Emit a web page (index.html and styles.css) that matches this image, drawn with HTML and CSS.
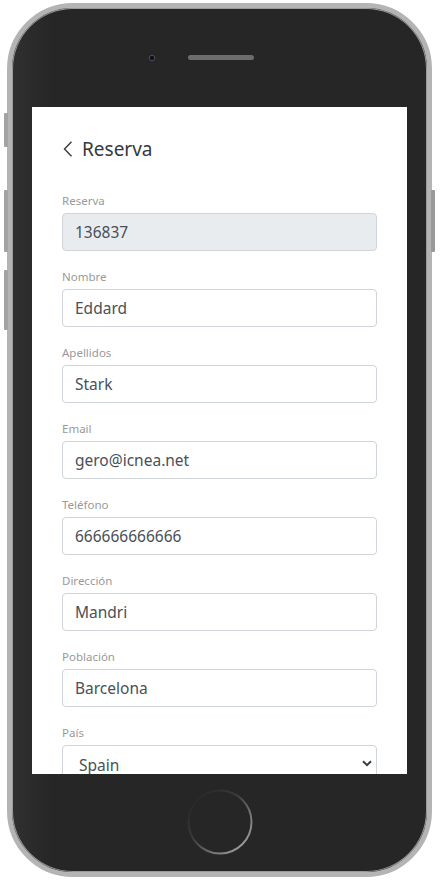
FILE: index.html
```html
<!DOCTYPE html>
<html lang="es">
<head>
<meta charset="utf-8">
<title>Reserva</title>
<link rel="stylesheet" href="styles.css">
</head>
<body>
<div class="device">
  <span class="side-btn side-btn--mute"></span>
  <span class="side-btn side-btn--vol-up"></span>
  <span class="side-btn side-btn--vol-down"></span>
  <span class="side-btn side-btn--power"></span>
  <div class="phone">
    <div class="bezel-top">
      <span class="camera"></span>
      <span class="speaker"></span>
    </div>
    <div class="screen">
      <div class="content">
        <header class="page-header">
          <svg class="back-icon" width="10" height="16" viewBox="0 0 10 16" aria-hidden="true">
            <polyline points="8.5,0.8 1.5,8 8.5,15.2" fill="none" stroke="#343a40" stroke-width="1.4"/>
          </svg>
          <h1 class="page-title">Reserva</h1>
        </header>
        <form class="form">
          <div class="field">
            <label class="field-label">Reserva</label>
            <input class="field-input field-input--disabled" type="text" value="136837" disabled>
          </div>
          <div class="field">
            <label class="field-label">Nombre</label>
            <input class="field-input" type="text" value="Eddard">
          </div>
          <div class="field">
            <label class="field-label">Apellidos</label>
            <input class="field-input" type="text" value="Stark">
          </div>
          <div class="field">
            <label class="field-label">Email</label>
            <input class="field-input" type="text" value="gero@icnea.net">
          </div>
          <div class="field">
            <label class="field-label">Teléfono</label>
            <input class="field-input" type="text" value="666666666666">
          </div>
          <div class="field">
            <label class="field-label">Dirección</label>
            <input class="field-input" type="text" value="Mandri">
          </div>
          <div class="field">
            <label class="field-label">Población</label>
            <input class="field-input" type="text" value="Barcelona">
          </div>
          <div class="field">
            <label class="field-label">País</label>
            <div class="select-wrap">
              <select class="field-input field-select">
                <option>Spain</option>
              </select>
              <svg class="select-caret" width="10" height="7" viewBox="0 0 10 7" aria-hidden="true">
                <polyline points="1,1.2 5,5.2 9,1.2" fill="none" stroke="#343a40" stroke-width="2"/>
              </svg>
            </div>
          </div>
        </form>
      </div>
    </div>
    <div class="bezel-bottom">
      <svg class="home-btn" width="68" height="68" viewBox="0 0 68 68" aria-hidden="true">
        <defs>
          <linearGradient id="ring" x1="0.1" y1="0.1" x2="0.9" y2="0.9">
            <stop offset="0" stop-color="#262626"/>
            <stop offset="0.4" stop-color="#3c3c3c"/>
            <stop offset="1" stop-color="#a0a0a0"/>
          </linearGradient>
        </defs>
        <circle cx="34" cy="34" r="31.5" fill="none" stroke="url(#ring)" stroke-width="2"/>
      </svg>
    </div>
  </div>
</div>
</body>
</html>
```

FILE: styles.css
```css
* { box-sizing: border-box; }

html, body {
  margin: 0;
  padding: 0;
  background: #ffffff;
}

body {
  font-family: "Noto Sans", "Open Sans", sans-serif;
  width: 448px;
  height: 886px;
  overflow: hidden;
}

.device {
  position: relative;
  width: 425px;
  height: 874px;
  margin: 3px 0 0 7px;
}

.phone {
  width: 425px;
  height: 874px;
  border: 5px solid #b4b4b4;
  border-radius: 66px;
  background: linear-gradient(90deg, #303030 0px, #262626 40px, #262626 100%);
  display: flex;
  flex-direction: column;
  align-items: center;
  overflow: hidden;
  box-shadow: inset 0 0 0 1px #9a9a9a;
}

.side-btn {
  position: absolute;
  width: 4px;
  background: #a3a3a3;
  border-radius: 1px;
}
.side-btn--mute { left: -3px; top: 110px; height: 34px; }
.side-btn--vol-up { left: -3px; top: 187px; height: 62px; }
.side-btn--vol-down { left: -3px; top: 267px; height: 60px; }
.side-btn--power { right: -3px; top: 187px; height: 62px; background: #999; }

.bezel-top {
  height: 99px;
  width: 100%;
  flex: none;
  display: flex;
  align-items: center;
  justify-content: center;
  gap: 32px;
  padding: 0 37px 0 0;
}

.camera {
  width: 8px;
  height: 8px;
  border-radius: 50%;
  background: radial-gradient(circle at 50% 50%, #101014 0, #101014 1.6px, #4a4a5c 2.6px, #1c1c22 4px);
}

.speaker {
  width: 66px;
  height: 5px;
  border-radius: 3px;
  background-color: #555;
  background-image: radial-gradient(circle, #7a7a7a 0.6px, transparent 0.9px);
  background-size: 2px 2px;
}

.screen {
  width: 375px;
  height: 667px;
  flex: none;
  background: #ffffff;
  overflow: hidden;
}

.content {
  padding: 30px 30px 0 30px;
}

.page-header {
  display: flex;
  align-items: center;
  gap: 9px;
  height: 24px;
  padding-left: 1px;
}

.back-icon { flex: none; }

.page-title {
  margin: 0;
  font-size: 19px;
  font-weight: 400;
  line-height: 24px;
  color: #343a40;
}

.form {
  margin-top: 31px;
  display: flex;
  flex-direction: column;
  gap: 17px;
}

.field {
  display: flex;
  flex-direction: column;
  gap: 3px;
}

.field-label {
  font-size: 11.5px;
  line-height: 18px;
  color: #999;
}

.field-input {
  width: 315px;
  height: 38px;
  margin: 0;
  padding: 0 12px;
  border: 1px solid #ced4da;
  border-radius: 4px;
  background: #fff;
  font-family: inherit;
  font-size: 15.5px;
  color: #495057;
  outline: none;
}

.field-input--disabled {
  background: #e9ecef;
  color: #495057;
  -webkit-text-fill-color: #495057;
  opacity: 1;
}

.select-wrap {
  position: relative;
  width: 315px;
}

.field-select {
  appearance: none;
  -webkit-appearance: none;
  padding-left: 16px;
  height: 40px;
}

.select-caret {
  position: absolute;
  right: 5px;
  top: 15px;
}

.bezel-bottom {
  flex: 1;
  width: 100%;
  display: flex;
  align-items: center;
  justify-content: center;
  padding-bottom: 2px;
}

.home-btn { display: block; }
```
